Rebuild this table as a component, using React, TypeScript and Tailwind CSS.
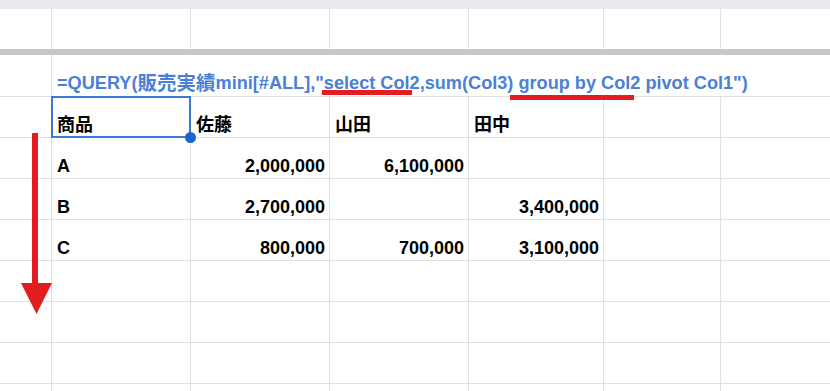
import React from "react";

const LINE = "border-[#e0e0e0]";

type CellProps = { w: string; children?: React.ReactNode; right?: boolean; last?: boolean };

function Cell({ w, children, right, last }: CellProps) {
  return (
    <div
      className={`${w} h-full shrink-0 ${last ? "" : "border-r"} ${LINE} flex items-end pb-[3px] ${
        right ? "justify-end pr-[4px]" : "pl-[5px]"
      } whitespace-nowrap`}
    >
      {children}
    </div>
  );
}

function Row({ cells, h = "h-[41px]", bottom = true }: { cells: (React.ReactNode | [React.ReactNode, boolean])[]; h?: string; bottom?: boolean }) {
  const widths = ["w-[52px]", "w-[139px]", "w-[139px]", "w-[139px]", "w-[135px]", "w-[117px]", "flex-1"];
  return (
    <div className={`flex ${h} ${bottom ? "border-b" : ""} ${LINE} shrink-0`}>
      {widths.map((w, i) => {
        const c = cells[i];
        const isArr = Array.isArray(c);
        return (
          <Cell key={i} w={w} right={isArr ? (c as [React.ReactNode, boolean])[1] : false} last={i === 6}>
            {isArr ? (c as [React.ReactNode, boolean])[0] : c}
          </Cell>
        );
      })}
    </div>
  );
}

export default function App() {
  const font = { fontFamily: '"Liberation Sans", Arial, "Noto Sans CJK JP", sans-serif' };
  const data: (React.ReactNode | [React.ReactNode, boolean])[][] = [
    [null, "商品", "佐藤", "山田", "田中", null, null],
    [null, "A", ["2,000,000", true], ["6,100,000", true], null, null, null],
    [null, "B", ["2,700,000", true], null, ["3,400,000", true], null, null],
    [null, "C", ["800,000", true], ["700,000", true], ["3,100,000", true], null, null],
    [null, null, null, null, null, null, null],
    [null, null, null, null, null, null, null],
    [null, null, null, null, null, null, null],
  ];
  return (
    <div
      className="relative w-[830px] h-[391px] overflow-hidden bg-white text-black font-bold text-[18px] leading-[18px] flex flex-col"
      style={font}
    >
      <div className="h-[9px] bg-[#e8eaed] shrink-0" />
      <Row cells={[]} h="h-[40px]" bottom={false} />
      <div className="h-[6px] bg-[#c7c7c7] shrink-0" />
      <div className={`flex h-[42px] border-b ${LINE} shrink-0`}>
        <div className={`w-[52px] h-full border-r ${LINE} shrink-0`} />
        <div className="flex-1 h-full flex items-end pb-[4px] pl-[5px] whitespace-nowrap text-[#4a80d6] text-[18.15px]">
          =QUERY(<span className="text-[19.5px]">販売実績</span>mini[#ALL],"select Col2,sum(Col3) group by Col2 pivot Col1")
        </div>
      </div>
      {data.map((r, i) => (
        <Row key={i} cells={r} />
      ))}
      <Row cells={[]} h="h-[8px]" bottom={false} />

      {/* red underlines */}
      <div className="absolute left-[322px] top-[90px] w-[90px] h-[5px] bg-[#e31c1f]" />
      <div className="absolute left-[510px] top-[95px] w-[124px] h-[5px] bg-[#e31c1f]" />

      {/* selection */}
      <div className="absolute left-[51px] top-[96px] w-[140px] h-[42px] border-2 border-[#3b78d8]" />
      <div className="absolute left-[185px] top-[132px] w-[11px] h-[11px] rounded-full bg-[#1f62d4]" />

      {/* red arrow */}
      <svg className="absolute left-0 top-0" width="830" height="391" viewBox="0 0 830 391">
        <rect x="32" y="133" width="6" height="152" fill="#e31c1f" />
        <polygon points="21,283 52,283 36.5,314" fill="#e31c1f" />
      </svg>
    </div>
  );
}
